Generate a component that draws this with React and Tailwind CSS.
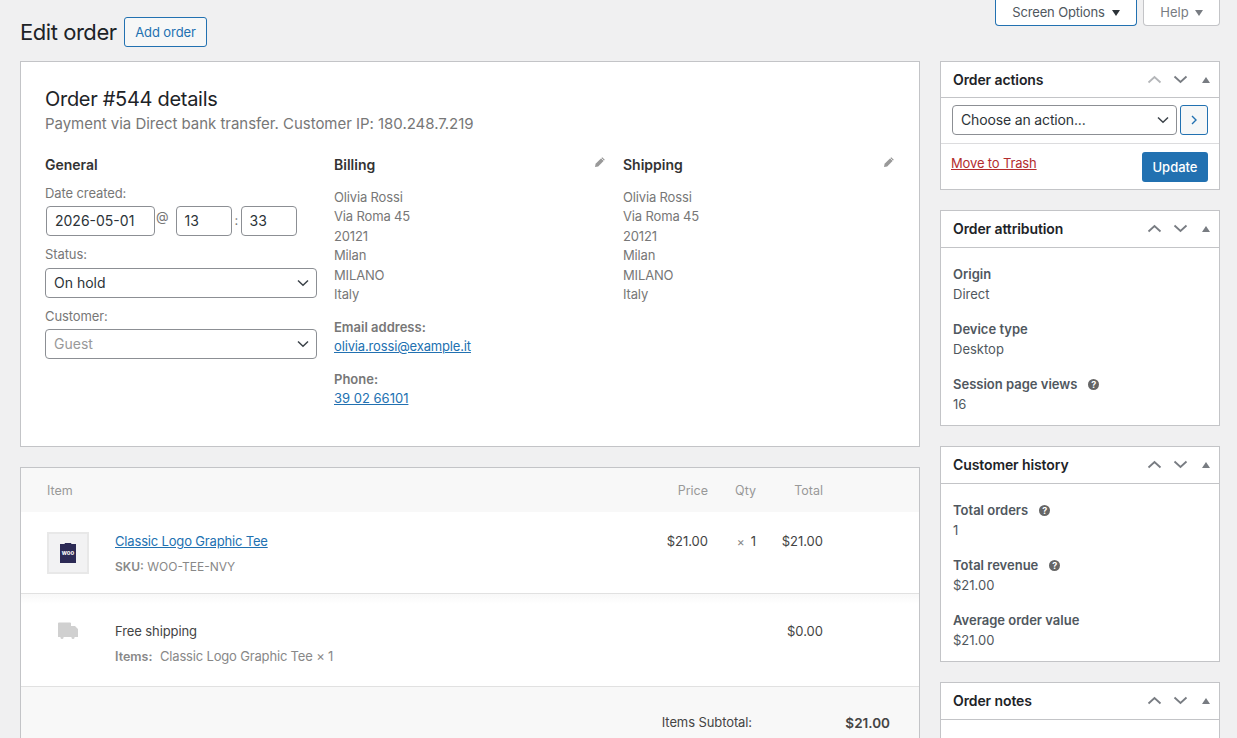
import React from "react";

const F = "font-['Inter','Liberation_Sans',sans-serif]";

function Chevron({ className = "" }) {
  return (
    <svg width="12" height="8" viewBox="0 0 12 8" fill="none" className={className}>
      <path d="M1 1.5 L6 6.2 L11 1.5" stroke="#3c434a" strokeWidth="1.5" />
    </svg>
  );
}

function Pencil() {
  return (
    <svg width="12" height="12" viewBox="0 0 12 12">
      <path d="M8.2 1.2 L10.8 3.8 L4.2 10.4 L1 11 L1.6 7.8 Z" fill="#999" />
      <path d="M7.2 2.2 L9.8 4.8" stroke="#fff" strokeWidth="0.8" />
    </svg>
  );
}

function Help() {
  return (
    <span className="ml-[11px] inline-flex h-[11px] w-[11px] items-center justify-center rounded-full bg-[#666] text-[9px] font-bold leading-none text-white">
      ?
    </span>
  );
}

function SideBox({ title, upDim, children, headerClass = "h-[37px] pb-[1px]" }) {
  return (
    <section className="border border-[#c3c4c7] bg-white">
      <div className={`flex items-center justify-between border-b border-[#c3c4c7] pl-3 pr-[9px] ${headerClass}`}>
        <h2 className="text-[14px] font-semibold tracking-[-0.1px] text-[#1d2327]">{title}</h2>
        <div className="flex items-center">
          <svg width="15" height="9" viewBox="0 0 15 9" fill="none">
            <path d="M1.5 7.5 L7.5 2 L13.5 7.5" stroke={upDim ? "#b4b6b9" : "#787c82"} strokeWidth="1.8" />
          </svg>
          <svg width="15" height="9" viewBox="0 0 15 9" fill="none" className="ml-[11px]">
            <path d="M1.5 1.5 L7.5 7 L13.5 1.5" stroke="#787c82" strokeWidth="1.8" />
          </svg>
          <svg width="8" height="6" viewBox="0 0 8 6" className="ml-[14px]">
            <path d="M0 6 L4 0 L8 6 Z" fill="#787c82" />
          </svg>
        </div>
      </div>
      {children}
    </section>
  );
}

function Stat({ label, value, help }) {
  return (
    <div className="mb-[15px] text-[13px] leading-[20px] last:mb-[11px]">
      <div className="flex items-center font-semibold text-[#50575e]">
        {label}
        {help && <Help />}
      </div>
      <div className="text-[#50575e]">{value}</div>
    </div>
  );
}

function Field({ children, className = "" }) {
  return (
    <div className={`flex h-[30px] items-center rounded-[4px] border border-[#8c8f94] bg-white px-2 pb-[1px] text-[14px] text-[#2c3338] ${className}`}>
      {children}
    </div>
  );
}

function Address() {
  return (
    <div className="text-[13px] leading-[19.5px] tracking-[-0.15px] text-[#777]">
      <div>Olivia Rossi</div>
      <div>Via Roma 45</div>
      <div>20121</div>
      <div>Milan</div>
      <div>MILANO</div>
      <div>Italy</div>
    </div>
  );
}

export default function App() {
  return (
    <div className={`${F} h-[738px] w-[1237px] overflow-hidden bg-[#f0f0f1] pl-5 pr-[17px] antialiased`}>
      <div className="flex h-[26px] justify-end gap-[6px]">
        <div className="flex h-[26px] w-[142px] items-center justify-center gap-[7px] rounded-b-[4px] border border-t-0 border-[#2271b1] bg-white text-[13px] tracking-[-0.15px] text-[#50575e]">
          Screen Options
          <svg width="8" height="6" viewBox="0 0 8 6"><path d="M0 0 H8 L4 6 Z" fill="#2c3338" /></svg>
        </div>
        <div className="flex h-[26px] w-[77px] items-center justify-center gap-[6px] rounded-b-[4px] border border-t-0 border-[#c3c4c7] bg-white text-[13px] text-[#787c82]">
          Help
          <svg width="8" height="6" viewBox="0 0 8 6"><path d="M0 0 H8 L4 6 Z" fill="#787c82" /></svg>
        </div>
      </div>

      <div className="mt-[-9px] flex h-[30px] items-center">
        <h1 className="w-[104px] text-[22px] font-normal tracking-[-0.45px] text-[#1d2327]">Edit order</h1>
        <a className="flex h-[30px] w-[83px] items-center justify-center rounded-[3px] border border-[#2271b1] bg-[#f6f7f7] pt-[1px] text-[13px] tracking-[-0.1px] text-[#2271b1]">
          Add order
        </a>
      </div>

      <div className="mt-[14px] flex items-start gap-5">
        <main className="w-[900px] shrink-0">
          <section className="h-[386px] border border-[#c3c4c7] bg-white pl-6 pr-6 pt-[23px]">
            <h2 className="text-[20px] leading-[29px] font-normal tracking-[-0.3px] text-[#1d2327]">Order #544 details</h2>
            <p className="-mt-[1px] text-[15px] leading-[21px] tracking-[-0.03px] text-[#777]">
              Payment via Direct bank transfer. Customer IP: 180.248.7.219
            </p>
            <div className="mt-[21px] grid grid-cols-[272px_272px_272px] gap-x-[17px]">
              <div>
                <h3 className="text-[14px] font-semibold leading-[20px] text-[#333]">General</h3>
                <div className="mt-[9px] text-[13px] leading-[19px] tracking-[-0.1px] text-[#777]">Date created:</div>
                <div className="mt-[3px] flex items-center">
                  <Field className="ml-px w-[109px]">2026-05-01</Field>
                  <span className="ml-px mb-2 text-[13px] text-[#777]">@</span>
                  <Field className="ml-[7px] w-[56px]">13</Field>
                  <span className="mx-[3px] w-[3px] text-[13px] text-[#777]">:</span>
                  <Field className="w-[56px]">33</Field>
                </div>
                <div className="mt-[9px] text-[13px] leading-[19px] tracking-[-0.1px] text-[#777]">Status:</div>
                <Field className="mt-[4px] justify-between pr-[7px] text-[13px]">
                  On hold <Chevron />
                </Field>
                <div className="mt-[9px] text-[13px] leading-[19px] tracking-[-0.1px] text-[#777]">Customer:</div>
                <Field className="mt-[3px] justify-between pr-[7px] text-[13px] text-[#999]">
                  Guest <Chevron />
                </Field>
              </div>

              <div>
                <div className="flex items-start justify-between">
                  <h3 className="text-[14px] font-semibold leading-[20px] text-[#333]">Billing</h3>
                  <span className="mt-px"><Pencil /></span>
                </div>
                <div className="mt-[12.5px]"><Address /></div>
                <div className="mt-[13px] text-[13px] font-semibold leading-[19.5px] text-[#777]">Email address:</div>
                <a className="block text-[13px] leading-[19.5px] tracking-[-0.15px] text-[#2271b1] underline">olivia.rossi@example.it</a>
                <div className="mt-[13px] text-[13px] font-semibold leading-[19.5px] text-[#777]">Phone:</div>
                <a className="block text-[13px] leading-[19.5px] text-[#2271b1] underline">39 02 66101</a>
              </div>

              <div>
                <div className="flex items-start justify-between">
                  <h3 className="text-[14px] font-semibold leading-[20px] text-[#333]">Shipping</h3>
                  <span className="mt-px"><Pencil /></span>
                </div>
                <div className="mt-[12.5px]"><Address /></div>
              </div>
            </div>
          </section>

          <section className="mt-5 border border-[#c3c4c7] bg-white">
            <div className="flex h-[44px] items-center bg-[#f8f8f8] pl-[26px] pt-[2px] text-[12.5px] text-[#999]">
              <span className="w-[629px]">Item</span>
              <span className="w-[32px] text-right">Price</span>
              <span className="ml-[26px] w-[22px] text-right">Qty</span>
              <span className="ml-[37px] w-[30px] text-right">Total</span>
            </div>
            <div className="flex h-[82px] items-start border-b border-[#e1e1e1] pl-[26px] pt-[20px] text-[13px]">
              <div className="flex h-[42px] w-[42px] items-center justify-center border-2 border-[#e8e8e8] bg-[#f2f2f3]">
                <svg width="16" height="20" viewBox="0 0 16 20">
                  <path d="M0 1 H4.5 L5 0 H11 L11.5 1 H16 V20 H0 Z" fill="#2c2a55" />
                  <text x="8" y="12" textAnchor="middle" fontSize="6" fontWeight="700" fill="#fff" fontFamily="Inter, sans-serif">woo</text>
                </svg>
              </div>
              <div className="ml-[26px] w-[522px]">
                <a className="block leading-[19px] tracking-[-0.17px] text-[#2271b1] underline">Classic Logo Graphic Tee</a>
                <div className="mt-[7px] text-[12px] leading-[18px] text-[#888]">
                  <b className="font-semibold">SKU:</b> WOO-TEE-NVY
                </div>
              </div>
              <span className="w-[71px] text-right leading-[19px] text-[#444]">$21.00</span>
              <span className="ml-[26px] flex w-[22px] justify-end leading-[19px] text-[#444]">
                <span className="mr-[6px] text-[12px] text-[#888]">×</span>1
              </span>
              <span className="w-[67px] text-right leading-[19px] text-[#444]">$21.00</span>
            </div>
            <div className="h-[10px] bg-gradient-to-b from-[#f8f8f8] to-white" />
            <div className="flex h-[83px] items-start border-b border-[#e1e1e1] pl-[37px] pt-[18px] text-[13px]">
              <svg width="20" height="17" viewBox="0 0 20 17">
                <path d="M1 0.5 H12 Q13 0.5 13 1.5 V4 H17 L20 7 V15 H0 V1.5 Q0 0.5 1 0.5 Z" fill="#d0d0d0" />
                <circle cx="4" cy="15.5" r="1.5" fill="#d0d0d0" />
                <circle cx="15" cy="15.5" r="1.5" fill="#d0d0d0" />
              </svg>
              <div className="ml-[37px] w-[600px]">
                <div className="leading-[19px] tracking-[-0.1px] text-[#444]">Free shipping</div>
                <div className="mt-[6px] text-[12.5px] leading-[19px] text-[#888]">
                  <b className="font-semibold">Items:</b> <span className="ml-[4px] text-[13px] tracking-[-0.17px]">Classic Logo Graphic Tee × 1</span>
                </div>
              </div>
              <span className="ml-[69px] w-[39px] text-right leading-[19px] text-[#444]">$0.00</span>
            </div>
            <div className="flex h-[80px] justify-end bg-[#f8f8f8] pr-[29px] pt-[26px] text-[13px] text-[#444]">
              <span className="-ml-px tracking-[-0.1px]">Items Subtotal:</span>
              <b className="ml-[84px] w-[54px] text-right text-[13.5px] font-semibold">$21.00</b>
            </div>
          </section>
        </main>

        <aside className="flex w-[280px] shrink-0 flex-col gap-5">
          <SideBox title="Order actions" upDim headerClass="h-[36px]">
            <div className="flex h-[46px] items-start border-b border-[#dcdcde] pl-[11px] pt-[7px]">
              <Field className="w-[225px] justify-between pr-[7px] text-[13px] tracking-[-0.15px]">Choose an action... <Chevron /></Field>
              <div className="ml-[3px] flex h-[30px] w-[28px] items-center justify-center rounded-[3px] border border-[#2271b1] bg-[#f6f7f7]">
                <svg width="7" height="10" viewBox="0 0 7 10" fill="none"><path d="M1 1 L5 5 L1 9" stroke="#2271b1" strokeWidth="1.4" /></svg>
              </div>
            </div>
            <div className="flex h-[45px] items-start justify-between pl-[10px] pr-[11px] pt-[8px]">
              <a className="mt-px text-[13px] leading-[20px] tracking-[-0.15px] text-[#b32d2e] underline">Move to Trash</a>
              <div className="flex h-[30px] w-[66px] items-center justify-center rounded-[3px] bg-[#2271b1] pt-[1px] text-[13px] font-medium text-white">Update</div>
            </div>
          </SideBox>

          <SideBox title="Order attribution">
            <div className="pl-3 pt-[16px]">
              <Stat label="Origin" value="Direct" />
              <Stat label="Device type" value="Desktop" />
              <Stat label="Session page views" value="16" help />
            </div>
          </SideBox>

          <SideBox title="Customer history">
            <div className="pl-3 pt-[16px]">
              <Stat label="Total orders" value="1" help />
              <Stat label="Total revenue" value="$21.00" help />
              <Stat label="Average order value" value="$21.00" />
            </div>
          </SideBox>

          <SideBox title="Order notes">
            <div className="h-[60px]" />
          </SideBox>
        </aside>
      </div>
    </div>
  );
}
